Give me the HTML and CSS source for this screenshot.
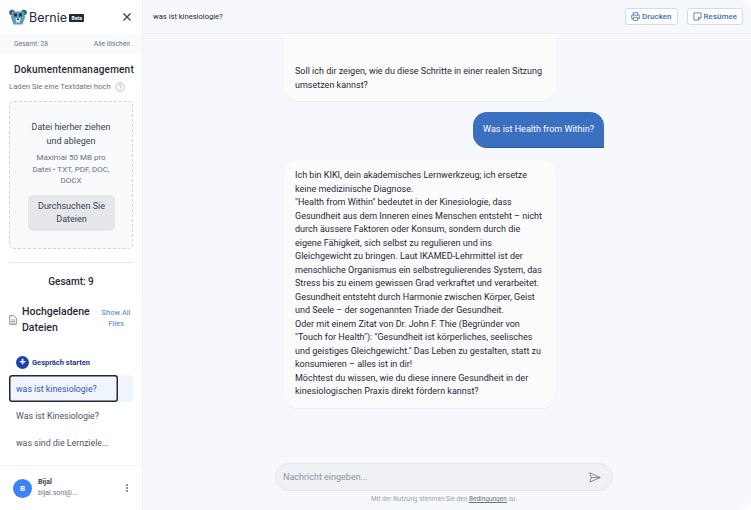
FILE: index.html
```html
<!DOCTYPE html>
<html lang="de">
<head>
    <meta charset="UTF-8">
    <meta name="viewport" content="width=device-width, initial-scale=1.0">
    <title>Bernie</title>
    <link rel="stylesheet" href="styles.css">
</head>
<body>

    <!-- Sidebar -->
    <aside class="sidebar">
        <div class="brand">
            <svg class="brand-logo" width="18" height="16" viewBox="0 0 18 16">
                <circle cx="3" cy="3.500" r="2.800" fill="#2f6280"/>
                <circle cx="15" cy="3.500" r="2.800" fill="#2f6280"/>
                <path d="M3 2.500h12l1 6-2.500 7h-9L2 8.500z" fill="#5c9cbf"/>
                <path d="M5 4.500h3v3H5zM10 4.500h3v3h-3z" fill="#1d3444"/>
                <path d="M6.500 9h5l-.8 4.500H7.300z" fill="#dfeaf0"/>
                <path d="M8 9.500h2V11H8z" fill="#1d3444"/>
            </svg>
            <span class="brand-name">Bernie</span>
            <span class="brand-tag">Beta</span>
            <svg class="brand-close" width="10" height="10" viewBox="0 0 10 10">
                <path d="M1.500 1.500l7 7M8.500 1.500l-7 7" stroke="#374151" stroke-width="1.300" fill="none"/>
            </svg>
        </div>

        <div class="totals">
            <span>Gesamt: 28</span>
            <span>Alle löschen</span>
        </div>

        <div class="documents">
            <h2>Dokumentenmanagement</h2>
            <p class="upload-label">
                Laden Sie eine Textdatei hoch
                <svg width="10" height="10" viewBox="0 0 10 10">
                    <circle cx="5" cy="5" r="4.200" stroke="#9ca3af" stroke-width="0.700" fill="none"/>
                    <path d="M3.700 4c0-1.700 2.700-1.700 2.700 0 0 1-1.400 1-1.400 2" stroke="#9ca3af" stroke-width="0.700" fill="none"/>
                    <circle cx="5" cy="7.300" r="0.450" fill="#9ca3af"/>
                </svg>
            </p>

            <div class="dropzone">
                <p class="drop-title">Datei hierher ziehen und ablegen</p>
                <p class="drop-hint">Maximal 50 MB pro Datei • TXT, PDF, DOC, DOCX</p>
                <button class="browse">Durchsuchen Sie Dateien</button>
            </div>

            <hr class="divider">

            <p class="file-count">Gesamt: 9</p>

            <div class="files-head">
                <svg width="8" height="10" viewBox="0 0 8 10">
                    <path d="M.7.700h4.200l2.400 2.400v6.200H.7z" stroke="#6b7280" stroke-width="0.800" fill="none"/>
                    <path d="M2 5h4M2 6.500h4M2 8h4" stroke="#6b7280" stroke-width="0.600"/>
                </svg>
                <span class="files-title">Hochgeladene Dateien</span>
                <a class="show-all" href="#">Show All Files</a>
            </div>
        </div>

        <a class="new-chat" href="#">
            <span class="new-chat-icon">+</span>
            Gespräch starten
        </a>

        <ul class="chat-list">
            <li class="active"><a href="#">was ist kinesiologie?</a></li>
            <li><a href="#">Was ist Kinesiologie?</a></li>
            <li><a href="#">was sind die Lernziele...</a></li>
        </ul>

        <div class="user">
            <span class="avatar">B</span>
            <div class="user-info">
                <strong>Bijal</strong>
                <span>bijal.soni@...</span>
            </div>
            <span class="user-menu"><i></i><i></i><i></i></span>
        </div>
    </aside>

    <!-- Main Content -->
    <main class="main">
        <header class="topbar">
            <span class="topbar-title">was ist kinesiologie?</span>
            <a class="top-btn" href="#">
                <svg width="9" height="9" viewBox="0 0 10 10">
                    <path d="M2.500 3.500V.8h5v2.700M2.500 7.500H.8v-4h8.400v4H7.500M2.500 6h5v3.200h-5z" stroke="#3f6fb5" stroke-width="0.900" fill="none"/>
                </svg>
                Drucken
            </a>
            <a class="top-btn" href="#">
                <svg width="9" height="9" viewBox="0 0 10 10">
                    <path d="M1 1h8v5L6 9H1zM6 9V6h3" stroke="#3f6fb5" stroke-width="0.900" fill="none"/>
                </svg>
                Resümee
            </a>
        </header>

        <section class="messages">
            <div class="bubble bot first">
                Soll ich dir zeigen, wie du diese Schritte in einer realen Sitzung umsetzen kannst?
            </div>
            <div class="bubble user-msg">Was ist Health from Within?</div>
            <div class="bubble bot">
                Ich bin KIKI, dein akademisches Lernwerkzeug; ich ersetze keine medizinische Diagnose.<br>
                "Health from Within" bedeutet in der Kinesiologie, dass Gesundheit aus dem Inneren eines Menschen entsteht – nicht durch äussere Faktoren oder Konsum, sondern durch die eigene Fähigkeit, sich selbst zu regulieren und ins Gleichgewicht zu bringen. Laut IKAMED-Lehrmittel ist der menschliche Organismus ein selbstregulierendes System, das Stress bis zu einem gewissen Grad verkraftet und verarbeitet. Gesundheit entsteht durch Harmonie zwischen Körper, Geist und Seele – der sogenannten Triade der Gesundheit.<br>
                Oder mit einem Zitat von Dr. John F. Thie (Begründer von "Touch for Health"): "Gesundheit ist körperliches, seelisches und geistiges Gleichgewicht." Das Leben zu gestalten, statt zu konsumieren – alles ist in dir!<br>
                Möchtest du wissen, wie du diese innere Gesundheit in der kinesiologischen Praxis direkt fördern kannst?
            </div>
        </section>

        <footer class="composer">
            <div class="input-box">
                <span>Nachricht eingeben...</span>
                <svg width="12" height="11" viewBox="0 0 12 11">
                    <path d="M.8.800l10.400 4.700L.8 10.200l1.500-4.700zM2.300 5.500h8.900" stroke="#6b7280" stroke-width="0.800" fill="none"/>
                </svg>
            </div>
            <p class="terms">Mit der Nutzung stimmen Sie den <a href="#">Bedingungen</a> zu.</p>
        </footer>
    </main>

</body>
</html>
```

FILE: styles.css
```css
* {
    box-sizing: border-box;
}

html, body {
    height: 100%;
}

body {
    font-family: 'Roboto', sans-serif;
    margin: 0;
    background-color: #fff;
    display: flex;
    overflow: hidden;
    color: #1f2937;
}

/* Sidebar */
.sidebar {
    width: 143px;
    flex-shrink: 0;
    height: 510px;
    display: flex;
    flex-direction: column;
    border-right: 1px solid #eef0f4;
}

.brand {
    height: 34px;
    display: flex;
    align-items: center;
    padding: 0 10px 0 9px;
    flex-shrink: 0;
}

.brand-name {
    font-family: 'Inter', sans-serif;
    font-size: 12.500px;
    font-weight: 400;
    color: #1f2937;
    margin-left: 2px;
}

.brand-tag {
    background-color: #1f2937;
    color: #fff;
    font-size: 5px;
    font-weight: 700;
    padding: 1px 2.500px;
    border-radius: 1px;
    margin-left: 2px;
    margin-top: 2px;
}

.brand-close {
    margin-left: auto;
}

.totals {
    height: 20px;
    background-color: #f8fafc;
    display: flex;
    justify-content: space-between;
    align-items: center;
    padding: 0 12px 0 14px;
    font-size: 6.700px;
    color: #6b7280;
    flex-shrink: 0;
}

.documents {
    padding: 0 9px;
}

.documents h2 {
    font-size: 10px;
    font-weight: 500;
    letter-spacing: 0.2px;
    text-align: center;
    margin: 8px 0 0;
    padding-left: 5px;
    line-height: 16px;
    white-space: nowrap;
    color: #1f2937;
}

.upload-label {
    font-size: 7.700px;
    color: #6b7280;
    margin: 3px 0 0;
    line-height: 12px;
    display: flex;
    align-items: center;
    gap: 4px;
}

.dropzone {
    margin-top: 8px;
    height: 148px;
    border: 1px dashed #d1d5db;
    border-radius: 5px;
    background-color: #f9fafb;
    padding: 18px 18px 0;
    text-align: center;
}

.drop-title {
    font-size: 9px;
    line-height: 14px;
    margin: 0;
    color: #374151;
}

.drop-hint {
    font-size: 8px;
    line-height: 11.500px;
    margin: 4px -1px 0;
    color: #6b7280;
}

.browse {
    display: block;
    width: 87px;
    height: 36px;
    margin: 8px auto 0;
    border: 0;
    border-radius: 5px;
    background-color: #e5e7eb;
    font-family: inherit;
    font-size: 9px;
    line-height: 13px;
    color: #374151;
    padding: 0 4px;
}

.divider {
    border: 0;
    border-top: 1px solid #e5e7eb;
    margin: 13px 0 0;
}

.file-count {
    font-size: 10px;
    font-weight: 500;
    text-align: center;
    margin: 12px 0 0;
    line-height: 14px;
}

.files-head {
    display: flex;
    align-items: center;
    margin-top: 15px;
}

.files-title {
    width: 70px;
    margin-left: 5px;
    font-size: 10.500px;
    font-weight: 500;
    line-height: 15.500px;
}

.show-all {
    width: 34px;
    margin-left: auto;
    margin-bottom: 3px;
    font-size: 7.500px;
    line-height: 11.500px;
    text-align: center;
    color: #4a7fd0;
    text-decoration: none;
}

.new-chat {
    display: flex;
    align-items: center;
    gap: 3px;
    margin: 21px 0 0 16px;
    font-size: 7.500px;
    font-weight: 700;
    color: #1e3a8a;
    text-decoration: none;
}

.new-chat-icon {
    width: 13px;
    height: 13px;
    border-radius: 50%;
    background-color: #1e40af;
    color: #fff;
    font-size: 11px;
    line-height: 12px;
    text-align: center;
}

.chat-list {
    list-style: none;
    margin: 6px 9px 0;
    padding: 0;
    font-size: 8.800px;
    color: #4b5563;
}

.chat-list li {
    height: 27px;
}

.chat-list a {
    display: block;
    width: 109px;
    height: 27px;
    line-height: 29px;
    padding-left: 7px;
    white-space: nowrap;
    color: inherit;
    text-decoration: none;
}

.chat-list li.active {
    background-color: #eff4fd;
    color: #2f5cae;
    border-radius: 4px;
}

.chat-list li.active a {
    border-radius: 3px;
    box-shadow: inset 0 0 0 1.500px #1f2937;
}

.user {
    margin-top: auto;
    height: 45px;
    border-top: 1px solid #f1f3f6;
    display: flex;
    align-items: center;
    padding: 0 14px 0 13px;
}

.avatar {
    width: 19px;
    height: 19px;
    border-radius: 50%;
    background-color: #3b82f6;
    color: #fff;
    font-size: 8px;
    font-weight: 700;
    line-height: 19px;
    text-align: center;
    flex-shrink: 0;
}

.user-info {
    margin-left: 6px;
    display: flex;
    flex-direction: column;
    font-size: 7px;
    line-height: 11px;
    color: #6b7280;
}

.user-info strong {
    color: #374151;
}

.user-menu {
    margin-left: auto;
    display: flex;
    flex-direction: column;
    gap: 1px;
}

.user-menu i {
    width: 2px;
    height: 2px;
    border-radius: 50%;
    background-color: #6b7280;
}

/* Main Content */
.main {
    flex: 1;
    height: 510px;
    background-color: #f6f8fc;
    display: flex;
    flex-direction: column;
    border-radius: 0 12px 12px 0;
    min-width: 0;
}

.topbar {
    height: 34px;
    flex-shrink: 0;
    display: flex;
    align-items: center;
    gap: 9px;
    padding: 0 8px 0 10px;
    border-bottom: 1px solid #eceff4;
}

.topbar-title {
    font-size: 7.600px;
    margin-right: auto;
    color: #1f2937;
}

.top-btn {
    height: 17px;
    display: flex;
    align-items: center;
    gap: 2px;
    padding: 0 5px;
    background-color: #fff;
    border: 1px solid #cfdcf0;
    border-radius: 3px;
    font-size: 8px;
    font-weight: 500;
    color: #3f6fb5;
    text-decoration: none;
}

.messages {
    flex: 1;
    overflow: hidden;
    display: flex;
    flex-direction: column;
    padding: 0 147px 0 141px;
    min-height: 0;
}

.bubble {
    font-size: 9px;
    line-height: 13.500px;
}

.bot {
    width: 272px;
    background-color: #fbfbfc;
    border-radius: 14px;
    padding: 9px 11px;
    color: #1f2937;
    box-shadow: 0 1px 1px rgba(0, 0, 0, 0.04);
}

.bot.first {
    border-radius: 0 0 14px 14px;
    padding-top: 31px;
}

.user-msg {
    align-self: flex-end;
    margin: 11px 0 12px;
    width: 131px;
    height: 36px;
    padding: 11px 10px;
    text-align: center;
    background-color: #3b6fc0;
    color: #fff;
    border-radius: 14px 14px 0 14px;
    border-bottom: 1px solid #2a5aa5;
    white-space: nowrap;
}

.composer {
    flex-shrink: 0;
    padding: 0 138px 6px 132px;
}

.input-box {
    height: 28px;
    border: 1px solid #e5e7eb;
    border-radius: 14px;
    background-color: #eff1f5;
    display: flex;
    align-items: center;
    justify-content: space-between;
    padding: 0 11px 0 7px;
    font-size: 9px;
    color: #8b93a1;
}

.terms {
    margin: 3px 0 0;
    text-align: center;
    font-size: 6.500px;
    line-height: 10px;
    color: #9ca3af;
}

.terms a {
    color: #6b7280;
}
```
